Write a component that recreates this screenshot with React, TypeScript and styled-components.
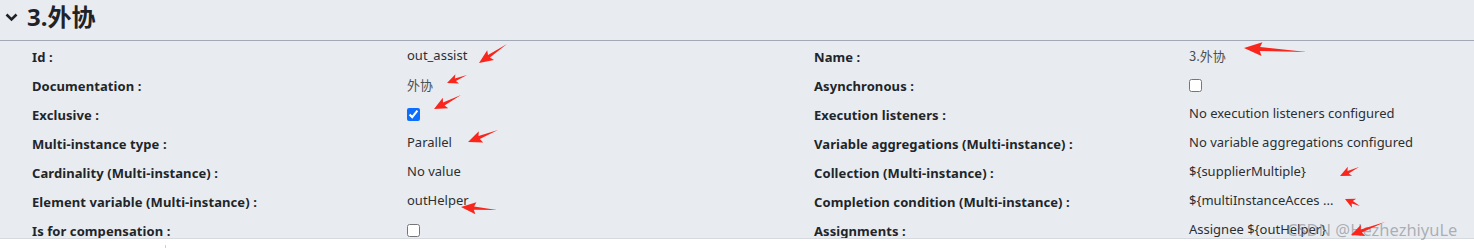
import React from "react";
import styled, { createGlobalStyle } from "styled-components";

const Global = createGlobalStyle`
  html, body { margin: 0; padding: 0; background: #ffffff; }
  body { font-family: "Noto Sans", "Noto Sans CJK SC", sans-serif; color: #212529; }
  * { box-sizing: border-box; }
`;

const Page = styled.div`
  position: relative;
  width: 1474px;
  height: 248px;
  overflow: hidden;
`;

const Panel = styled.section`
  height: 239px;
  background: #e8ecf1;
  border-bottom: 1px solid #d6d9dd;
  overflow: hidden;
`;

const Header = styled.header`
  height: 41px;
  display: flex;
  align-items: center;
  gap: 9px;
  padding: 0 0 6px 5px;
  border-bottom: 1px solid #a3a8b6;
`;

const Title = styled.h2`
  margin: 0;
  font-family: "Noto Sans", "Noto Sans CJK SC", sans-serif;
  font-size: 24px;
  font-weight: 700;
  line-height: 1;
  color: #1f2328;
`;

const Grid = styled.div`
  display: grid;
  grid-template-columns: 375px 407px 375px 1fr;
  grid-auto-rows: 29px;
  padding: 1px 0 0 32px;
`;

const Label = styled.div`
  display: flex;
  align-items: center;
  font-size: 13px;
  font-weight: 700;
  letter-spacing: 0.08px;
  color: #212529;
  white-space: nowrap;
`;

const Value = styled.div<{ $cjk?: boolean }>`
  display: flex;
  align-items: center;
  padding-bottom: 3px;
  font-size: 13px;
  font-weight: 400;
  color: ${(p) => (p.$cjk ? "#4a4f55" : "#2b2f33")};
  font-family: ${(p) =>
    p.$cjk ? `"Noto Sans CJK SC", sans-serif` : `"Noto Sans", "Noto Sans CJK SC", sans-serif`};
  white-space: nowrap;
`;

const Check = styled.input`
  margin: 3px 0 0 0;
  width: 13px;
  height: 13px;
  accent-color: #0b6efd;
`;

const Footer = styled.div`
  display: flex;
  padding-top: 6px;
  height: 9px;
`;

const FooterCell = styled.div`
  width: 166px;
  border-right: 1px solid #d0d0d0;
`;

const Overlay = styled.svg`
  position: absolute;
  left: 0;
  top: 0;
  pointer-events: none;
`;

const Watermark = styled.div`
  position: absolute;
  left: 1287px;
  top: 218px;
  font-family: "Noto Sans", sans-serif;
  font-size: 16.5px;
  color: rgba(118, 122, 128, 0.55);
  white-space: nowrap;
`;

const Chevron = () => (
  <svg width="13" height="10" viewBox="0 0 13 10">
    <polyline points="1.5,2.5 6.5,7.5 11.5,2.5" fill="none" stroke="#1f2328" strokeWidth="2.6" />
  </svg>
);

type Cell = { kind: "text"; text: string; cjk?: boolean } | { kind: "check"; checked: boolean };

const rows: [string, Cell, string, Cell][] = [
  ["Id :", { kind: "text", text: "out_assist" }, "Name :", { kind: "text", text: "3.外协", cjk: true }],
  ["Documentation :", { kind: "text", text: "外协", cjk: true }, "Asynchronous :", { kind: "check", checked: false }],
  ["Exclusive :", { kind: "check", checked: true }, "Execution listeners :", { kind: "text", text: "No execution listeners configured" }],
  ["Multi-instance type :", { kind: "text", text: "Parallel" }, "Variable aggregations (Multi-instance) :", { kind: "text", text: "No variable aggregations configured" }],
  ["Cardinality (Multi-instance) :", { kind: "text", text: "No value" }, "Collection (Multi-instance) :", { kind: "text", text: "${supplierMultiple}" }],
  ["Element variable (Multi-instance) :", { kind: "text", text: "outHelper" }, "Completion condition (Multi-instance) :", { kind: "text", text: "${multiInstanceAcces ..." }],
  ["Is for compensation :", { kind: "check", checked: false }, "Assignments :", { kind: "text", text: "Assignee ${outHelper}" }],
];

const renderCell = (c: Cell) =>
  c.kind === "text" ? (
    <Value $cjk={c.cjk}>{c.text}</Value>
  ) : (
    <Value>
      <Check type="checkbox" checked={c.checked} readOnly />
    </Value>
  );

// Red annotation arrows: tail (x1,y1) -> head (x2,y2)
const arrows = [
  { x1: 507, y1: 44, x2: 479, y2: 63, hl: 12, hw: 6 },
  { x1: 467, y1: 75, x2: 447, y2: 83, hl: 9, hw: 5 },
  { x1: 461, y1: 95, x2: 434, y2: 109, hl: 11, hw: 6 },
  { x1: 498, y1: 130, x2: 468, y2: 142, hl: 12, hw: 6 },
  { x1: 497, y1: 210, x2: 461, y2: 207, hl: 13, hw: 6 },
  { x1: 1307, y1: 52, x2: 1244, y2: 48, hl: 16, hw: 7 },
  { x1: 1359, y1: 167, x2: 1340, y2: 176, hl: 9, hw: 5 },
  { x1: 1360, y1: 206, x2: 1345, y2: 199, hl: 8, hw: 5 },
  { x1: 1385, y1: 222, x2: 1351, y2: 235, hl: 11, hw: 6 },
];

const arrowPoints = (a: (typeof arrows)[number]) => {
  const dx = a.x2 - a.x1;
  const dy = a.y2 - a.y1;
  const L = Math.hypot(dx, dy);
  const c = dx / L;
  const s = dy / L;
  const w = Math.max(2, a.hw * 0.55);
  const base = L - a.hl;
  const local: [number, number][] = [
    [0, 0],
    [base, -w / 2],
    [base - 2, -a.hw],
    [L, 0],
    [base - 2, a.hw],
    [base, w / 2],
  ];
  return local
    .map(([px, py]) => `${(a.x1 + px * c - py * s).toFixed(1)},${(a.y1 + px * s + py * c).toFixed(1)}`)
    .join(" ");
};

export default function App() {
  return (
    <Page>
      <Global />
      <Panel>
        <Header>
          <Chevron />
          <Title>3.外协</Title>
        </Header>
        <Grid>
          {rows.map(([l1, v1, l2, v2], i) => (
            <React.Fragment key={i}>
              <Label>{l1}</Label>
              {renderCell(v1)}
              <Label>{l2}</Label>
              {renderCell(v2)}
            </React.Fragment>
          ))}
        </Grid>
      </Panel>
      <Footer>
        <FooterCell />
      </Footer>
      <Watermark>CSDN @HezhezhiyuLe</Watermark>
      <Overlay width="1474" height="248" viewBox="0 0 1474 248">
        {arrows.map((a, i) => (
          <polygon key={i} points={arrowPoints(a)} fill="#f8261c" />
        ))}
      </Overlay>
    </Page>
  );
}
